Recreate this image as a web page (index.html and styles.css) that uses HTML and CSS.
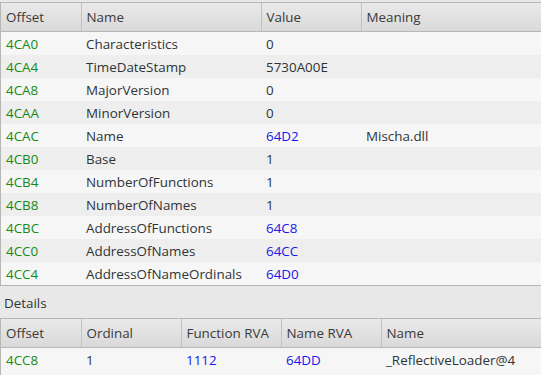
FILE: index.html
```html
<!DOCTYPE html>
<html lang="en">
<head>
    <meta charset="UTF-8">
    <title>Export Directory</title>
    <link rel="stylesheet" href="styles.css">
</head>
<body>
    <div class="panel">
        <table class="grid main">
            <colgroup>
                <col class="c-offset"><col class="c-name"><col class="c-value"><col>
            </colgroup>
            <thead>
                <tr><th>Offset</th><th>Name</th><th>Value</th><th>Meaning</th></tr>
            </thead>
            <tbody>
                <tr><td class="off">4CA0</td><td>Characteristics</td><td>0</td><td></td></tr>
                <tr><td class="off">4CA4</td><td>TimeDateStamp</td><td>5730A00E</td><td></td></tr>
                <tr><td class="off">4CA8</td><td>MajorVersion</td><td>0</td><td></td></tr>
                <tr><td class="off">4CAA</td><td>MinorVersion</td><td>0</td><td></td></tr>
                <tr><td class="off">4CAC</td><td>Name</td><td class="rva">64D2</td><td>Mischa.dll</td></tr>
                <tr><td class="off">4CB0</td><td>Base</td><td>1</td><td></td></tr>
                <tr><td class="off">4CB4</td><td>NumberOfFunctions</td><td>1</td><td></td></tr>
                <tr><td class="off">4CB8</td><td>NumberOfNames</td><td>1</td><td></td></tr>
                <tr><td class="off">4CBC</td><td>AddressOfFunctions</td><td class="rva">64C8</td><td></td></tr>
                <tr><td class="off">4CC0</td><td>AddressOfNames</td><td class="rva">64CC</td><td></td></tr>
                <tr><td class="off">4CC4</td><td>AddressOfNameOrdinals</td><td class="rva">64D0</td><td></td></tr>
            </tbody>
        </table>
    </div>

    <div class="section-label">Details</div>

    <div class="panel open">
        <table class="grid details">
            <colgroup>
                <col class="c-offset"><col class="c-narrow"><col class="c-narrow"><col class="c-narrow"><col>
            </colgroup>
            <thead>
                <tr><th>Offset</th><th>Ordinal</th><th>Function RVA</th><th>Name RVA</th><th>Name</th></tr>
            </thead>
            <tbody>
                <tr><td class="off">4CC8</td><td>1</td><td class="rva">1112</td><td class="rva">64DD</td><td>_ReflectiveLoader@4</td></tr>
            </tbody>
        </table>
    </div>
</body>
</html>
```

FILE: styles.css
```css
body {
    margin: 0;
    padding-top: 2px;
    background-color: #e8e8e8;
    font-family: "Open Sans", "DejaVu Sans", sans-serif;
    font-size: 13.4px;
    color: #2e3436;
}

.panel {
    border-top: 1px solid #b6b6b3;
    border-left: 1px solid #b6b6b3;
    border-bottom: 1px solid #b6b6b3;
    background-color: #f6f6f6;
}

.panel.open {
    border-bottom: none;
    padding-bottom: 12px;
}

.grid {
    width: 100%;
    border-collapse: collapse;
    table-layout: fixed;
}

.c-offset {
    width: 80px;
}

.c-name {
    width: 180px;
}

.c-value {
    width: 100px;
}

.c-narrow {
    width: 100px;
}

.grid th {
    height: 28px;
    padding: 0 5px;
    text-align: left;
    font-weight: normal;
    color: #3a3a3a;
    background: linear-gradient(#e9e9e9, #d9d9d9);
    border-left: 1px solid #c2c2c2;
    border-bottom: 1px solid #b6b6b3;
}

.grid th:first-child {
    border-left: none;
}

.grid td {
    height: 23px;
    padding: 0 5px;
    white-space: nowrap;
}

.main tbody tr:nth-child(even) {
    background-color: #eeeeee;
}

.off {
    color: #168a16;
}

.rva {
    color: #1818e8;
}

.section-label {
    height: 32px;
    line-height: 34px;
    padding-left: 4px;
}
```
